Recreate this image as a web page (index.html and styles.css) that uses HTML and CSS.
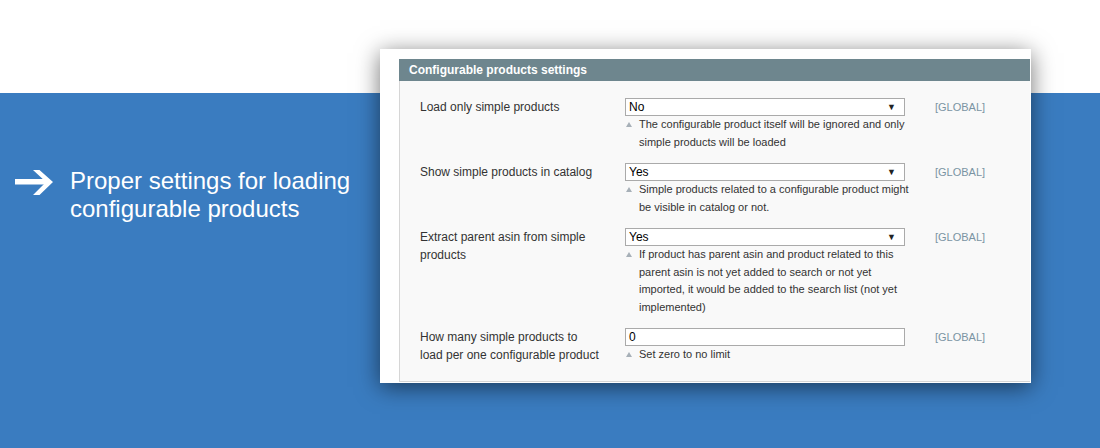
FILE: index.html
```html
<!DOCTYPE html>
<html lang="en">
<head>
    <meta charset="UTF-8">
    <title>Configurable products settings</title>
    <link rel="stylesheet" href="styles.css">
</head>
<body>
    <div class="intro">
        <svg class="arrow" width="40" height="28" viewBox="0 0 40 28">
            <rect x="0" y="9" width="32" height="5.5" fill="#fff"/>
            <polygon points="18,0 24.5,0 38,12 24.5,25 18,25 31,12" fill="#fff"/>
        </svg>
        <p class="intro-text">Proper settings for loading configurable products</p>
    </div>

    <div class="card">
        <div class="panel">
            <div class="panel-head">Configurable products settings</div>
            <div class="panel-body">
                <div class="row">
                    <div class="label">Load only simple products</div>
                    <div class="control">
                        <div class="select"><span>No</span><span class="caret">&#9660;</span></div>
                        <div class="note"><span class="tri"></span><span>The configurable product itself will be ignored and only simple products will be loaded</span></div>
                    </div>
                    <div class="scope">[GLOBAL]</div>
                </div>
                <div class="row">
                    <div class="label">Show simple products in catalog</div>
                    <div class="control">
                        <div class="select"><span>Yes</span><span class="caret">&#9660;</span></div>
                        <div class="note"><span class="tri"></span><span>Simple products related to a configurable product might be visible in catalog or not.</span></div>
                    </div>
                    <div class="scope">[GLOBAL]</div>
                </div>
                <div class="row">
                    <div class="label">Extract parent asin from simple products</div>
                    <div class="control">
                        <div class="select"><span>Yes</span><span class="caret">&#9660;</span></div>
                        <div class="note"><span class="tri"></span><span>If product has parent asin and product related to this parent asin is not yet added to search or not yet imported, it would be added to the search list (not yet implemented)</span></div>
                    </div>
                    <div class="scope">[GLOBAL]</div>
                </div>
                <div class="row">
                    <div class="label">How many simple products to load per one configurable product</div>
                    <div class="control">
                        <div class="select"><span>0</span></div>
                        <div class="note"><span class="tri"></span><span>Set zero to no limit</span></div>
                    </div>
                    <div class="scope">[GLOBAL]</div>
                </div>
            </div>
        </div>
    </div>
</body>
</html>
```

FILE: styles.css
```css
body {
    margin: 0;
    height: 448px;
    display: flex;
    font-family: "Liberation Sans", Arial, sans-serif;
    background: linear-gradient(#ffffff 0, #ffffff 93px, #3a7cc0 93px);
    overflow: hidden;
}
.intro {
    width: 365px;
    padding: 167px 0 0 15px;
    display: flex;
    align-items: flex-start;
}
.arrow {
    margin-top: 3px;
    flex: none;
}
.intro-text {
    margin: 0 0 0 15px;
    color: #fff;
    font-size: 24px;
    line-height: 28px;
    width: 290px;
}
.card {
    margin-top: 49px;
    width: 651px;
    height: 334px;
    box-sizing: border-box;
    padding: 10px 1px 1px 19px;
    background: #fff;
    box-shadow: 0 4px 22px rgba(0, 0, 0, 0.55);
}
.panel {
    height: 100%;
    display: flex;
    flex-direction: column;
}
.panel-head {
    height: 22px;
    line-height: 22px;
    padding-left: 10px;
    background: #6e868e;
    color: #fff;
    font-size: 12px;
    font-weight: bold;
}
.panel-body {
    flex: 1;
    background: #f9f9f9;
    border-left: 1px solid #d6d6d6;
    border-bottom: 1px solid #d6d6d6;
    padding: 17px 0 0 20px;
}
.row {
    display: flex;
    align-items: flex-start;
    margin-bottom: 12px;
}
.label {
    width: 181px;
    padding-right: 24px;
    font-size: 12px;
    line-height: 18px;
    color: #333;
}
.control {
    width: 280px;
}
.select {
    height: 18px;
    box-sizing: border-box;
    border: 1px solid #aaa;
    background: #fff;
    display: flex;
    justify-content: space-between;
    align-items: center;
    padding: 0 8px 0 3px;
    font-size: 12px;
    color: #000;
}
.caret {
    font-size: 9px;
    color: #222;
}
.note {
    display: flex;
    width: 291px;
    font-size: 11px;
    line-height: 17.5px;
    color: #333;
}
.tri {
    flex: none;
    width: 0;
    height: 0;
    margin: 6px 7px 0 1px;
    border-left: 3px solid transparent;
    border-right: 3px solid transparent;
    border-bottom: 5px solid #a7b0b8;
}
.scope {
    margin-left: 30px;
    font-size: 11px;
    line-height: 18px;
    color: #7a94a3;
}
```
